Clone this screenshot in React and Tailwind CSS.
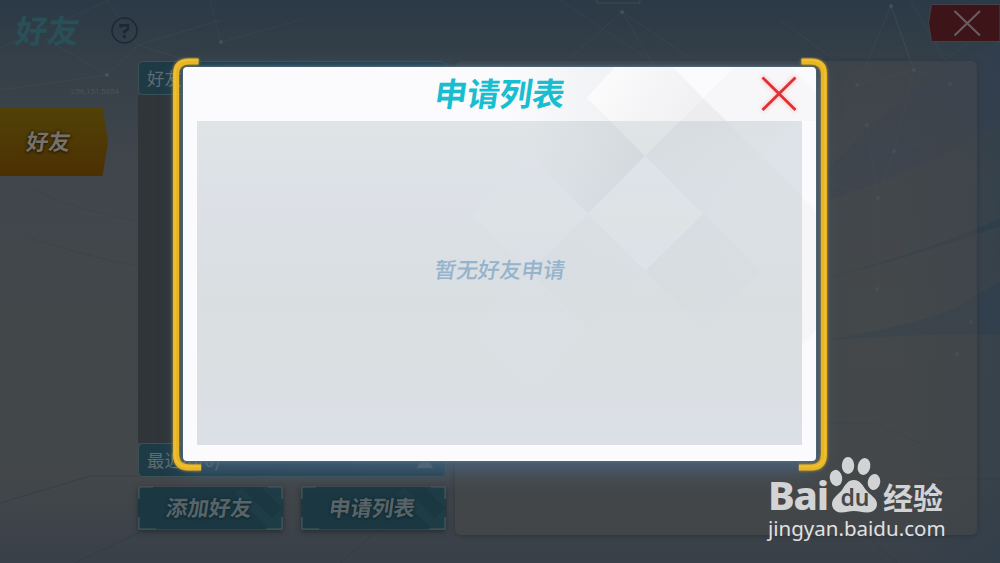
import React from 'react';

const cjk = "font-['Noto_Sans_CJK_SC',sans-serif]";

const stars = [
  [622, 12], [891, 6], [857, 85], [914, 70], [950, 84], [867, 125], [894, 151],
  [878, 198], [877, 289], [971, 322], [957, 354], [221, 42], [107, 75],
];

function Backdrop() {
  return (
    <svg className="absolute inset-0" width="1000" height="563" viewBox="0 0 1000 563" fill="none">
      <defs>
        <linearGradient id="sky" x1="0" y1="0" x2="0" y2="1">
          <stop offset="0" stopColor="#2b3a46" />
          <stop offset="0.12" stopColor="#364048" />
          <stop offset="0.3" stopColor="#40464c" />
          <stop offset="0.55" stopColor="#42484a" />
          <stop offset="0.85" stopColor="#43474a" />
          <stop offset="1" stopColor="#394049" />
        </linearGradient>
        <linearGradient id="side" x1="0" y1="0" x2="1" y2="0">
          <stop offset="0.9" stopColor="#2b3c4a" stopOpacity="0" />
          <stop offset="1" stopColor="#2b3c4a" stopOpacity="0.5" />
        </linearGradient>
      </defs>
      <rect width="1000" height="563" fill="url(#sky)" />
      <rect width="1000" height="563" fill="url(#side)" />
      <path d="M820 178 Q900 90 960 60 L1000 40 V124 Q900 180 820 202Z" fill="#334050" opacity="0.6" />
      <path d="M820 280 Q930 250 1000 219 V226 Q920 255 820 280Z" fill="#2d3d4b" opacity="0.8" />
      <path d="M820 341 Q920 325 960 306 Q980 292 1000 282 V334 Q900 334 820 341Z" fill="#313e4d" opacity="0.8" />
      <g stroke="#738087" strokeOpacity="0.1">
        <path d="M891 6 L857 85 L914 70Z M891 6 L914 70 L950 84 M622 12 L560 67 M622 12 L655 67 M622 12 L690 58 M560 0 L660 67 M867 125 L878 198 L894 151 L924 143 M894 151 L914 70 M878 198 V289 M820 180 L878 198 M820 125 H867" />
        <path d="M0 48 L110 0 M0 90 L107 75 L138 45 L221 20 M138 45 L107 0 M45 38 L107 75 M138 45 L180 58 M221 42 L210 0 M221 42 L300 20 M780 20 L835 60 M910 0 L945 60 L1000 20" />
      </g>
      <g stroke="#2d3a43" strokeOpacity="0.5">
        <path d="M0 503 L90 476 L138 476 M75 563 L140 532 M340 563 L378 530 M800 475 L897 563 M820 423 H875 L930 448 M930 479 L1000 479" />
        <path d="M30 188 Q80 212 138 221 M30 238 Q80 255 138 266" strokeOpacity="0.2" />
      </g>
      {stars.map(([x, y]) => (
        <circle key={`${x}-${y}`} cx={x} cy={y} r="2" fill="#7a8488" opacity="0.25" />
      ))}
      <path d="M597 0 V3 H640 V0" stroke="#59656c" strokeOpacity="0.4" />
    </svg>
  );
}

function Header() {
  return (
    <header className={`flex h-[61px] items-start ${cjk}`}>
      <h1 className="ml-[16px] mt-[9px] w-[67px] -skew-x-8 text-[32px] leading-[40px] font-bold text-[#295058]">好友</h1>
      <svg className="ml-[27px] mt-[17px]" width="28" height="28" viewBox="0 0 28 28" fill="none">
        <circle cx="14.5" cy="13.5" r="12.5" stroke="#1c2837" strokeWidth="1.5" />
        <path d="M10.8 10.8 V8.3 H17.8 V12.3 L14.3 14.8 V16.6" stroke="#1c2837" strokeWidth="2.8" />
        <rect x="12.9" y="18.2" width="2.9" height="2.9" fill="#1c2837" />
      </svg>
      <button className="ml-auto mt-1 block">
        <svg width="72" height="38" viewBox="0 0 72 38" fill="none">
          <path d="M3.5 .5 H72 V37.5 H3.5 L.5 19Z" fill="#3d1418" stroke="#43424a" strokeWidth="1" />
          <path d="M26.5 7 L52 31.5 M52 7 L26.5 31.5" stroke="#6b5d61" strokeWidth="2" />
        </svg>
      </button>
    </header>
  );
}

function Sidebar() {
  return (
    <nav className="w-[138px] shrink-0">
      <div className="flex h-[46px] justify-end pr-[19px] pt-[25px]">
        <span className="font-['Roboto',sans-serif] text-[8px] leading-[12px] text-[#575d61] opacity-60">256,151,5854</span>
      </div>
      <div className="flex h-[69px] w-[108px] items-center bg-linear-to-b from-[#514208] to-[#4c3003] pb-[3px] pl-[27px] [clip-path:polygon(0_0,95%_0,100%_50%,95%_100%,0_100%)]">
        <span className={`-skew-x-8 text-[22px] leading-none font-bold text-[#77716a] [text-shadow:0_0_3px_#251c04,0_1px_3px_#251c04] ${cjk}`}>好友</span>
      </div>
    </nav>
  );
}

function SectionBar({ label, arrow }) {
  return (
    <div className={`flex h-[34px] items-center justify-between rounded-[5px] border border-[#3a5157] bg-linear-to-r from-[#1d3a45] to-[#24424e] pl-[8px] pr-[12px] ${cjk}`}>
      <span className="text-[17.5px] leading-none text-[#5f6d72]">{label}</span>
      {arrow && (
        <svg width="16" height="15" viewBox="0 0 16 15">
          <path d="M8 0 L16 15 H0Z" fill="#56656f" />
        </svg>
      )}
    </div>
  );
}

function ActionButton({ children }) {
  return (
    <button className="grid h-[44px] w-[145px] shadow-[0_2px_5px_#252d33]">
      <svg className="col-start-1 row-start-1" width="145" height="44" viewBox="0 0 145 44" fill="none">
        <path d="M1 1 H144 V12 L145 14 V30 L144 32 V43 H1 V32 L0 30 V14 L1 12Z" fill="#1b3842" />
        <path d="M103 1 L134 32 L144 22 V43 H131 L97 9Z M123 1 L144 22 V1Z" fill="#33585b" opacity="0.15" />
        <path d="M1 13 V1 H15 M130 1 H144 V13 M1 31 V43 H18 M128 43 H144 V31" stroke="#465a5f" strokeWidth="1" />
      </svg>
      <span className={`col-start-1 row-start-1 self-center -skew-x-8 pr-[3px] pb-[3px] text-[21.5px] leading-none font-bold text-[#596469] [text-shadow:0_0_3px_#112932,0_1px_2px_#112932] ${cjk}`}>
        {children}
      </span>
    </button>
  );
}

function FriendPanel() {
  return (
    <section className="flex w-[308px] shrink-0 flex-col">
      <SectionBar label="好友(0/100)" />
      <div className="h-[348px] bg-[#2f3538]"></div>
      <SectionBar label="最近(0/0)" arrow />
      <div className="mt-[9px] flex justify-between">
        <ActionButton>添加好友</ActionButton>
        <ActionButton>申请列表</ActionButton>
      </div>
    </section>
  );
}

function Bracket({ flip }) {
  return (
    <svg className={flip ? 'relative -scale-x-100' : 'relative'} width="32" height="416" viewBox="0 0 32 416" fill="none">
      <path
        d="M28.5 4.5 H19 Q6 4.5 6 17 V397 Q6 410.5 19 410.5 H31"
        stroke="#e8b524"
        strokeWidth="6"
        className="[filter:drop-shadow(0_0_1.5px_#c9a32f)]"
      />
      <path d="M28.5 3 H19 Q5 3.5 5 17 V397 Q5 409.5 19 409.5 H31" stroke="#ffd24a" strokeOpacity="0.4" strokeWidth="1.5" />
    </svg>
  );
}

// faded checker tiles in the upper right of the dialog
function Checker() {
  return (
    <svg className="absolute inset-0" width="633" height="394" viewBox="183 67 633 394">
      <defs>
        <linearGradient id="shade" x1="0" y1="0" x2="1" y2="0">
          <stop offset="0" stopColor="#b4bdc2" stopOpacity="0" />
          <stop offset="1" stopColor="#aeb8bd" stopOpacity="0.36" />
        </linearGradient>
        <linearGradient id="shadeDown" x1="0" y1="0" x2="0.4" y2="1">
          <stop offset="0" stopColor="#aeb8be" stopOpacity="0.24" />
          <stop offset="1" stopColor="#c2cacd" stopOpacity="0.08" />
        </linearGradient>
        <linearGradient id="tile" x1="0" y1="0" x2="0" y2="1">
          <stop offset="0" stopColor="#dfe2eb" />
          <stop offset="0.55" stopColor="#dde3e5" />
          <stop offset="1" stopColor="#dee1e9" />
        </linearGradient>
        <linearGradient id="fold" x1="0" y1="0" x2="1" y2="0.3">
          <stop offset="0" stopColor="#fdfdfe" />
          <stop offset="1" stopColor="#f1f1f3" />
        </linearGradient>
        <clipPath id="body">
          <path d="M197 121 H802 V445 H197Z" />
        </clipPath>
      </defs>
      <path d="M500 67 H615 L587 98 L611 121 H500Z" fill="url(#shade)" opacity="0.4" />
      <path d="M615 67 H673 L703 98 L680 121 H611 L587 98Z" fill="url(#fold)" />
      <path d="M703 98 L680 121 H727Z" fill="#ededf0" />
      <path d="M703 98 L735 67 H790 L816 93 V121 H727Z" fill="#f7f6f8" />
      <path d="M802 197 L816 211 V330 L802 345Z" fill="#f6f5f8" />
      <g clipPath="url(#body)">
        <path d="M530 67 H615 L587 98 L645 156 L588 214 L530 156Z" fill="url(#shade)" opacity="0.6" />
        <path d="M703 98 L761 156 L703 214 L645 156Z" fill="url(#shadeDown)" />
        <path d="M703 98 L761 156 L802 115 V98Z" fill="url(#shadeDown)" opacity="0.5" />
        <path d="M530 156 L588 214 L530 271 L472 214Z" fill="url(#tile)" opacity="0.65" />
        <path d="M645 156 L703 214 L645 271 L588 214Z" fill="url(#tile)" />
        <path d="M761 156 L819 214 L761 271 L703 214Z" fill="#d9dfe2" opacity="0.6" />
        <path d="M761 156 L802 115 V197Z" fill="#dee2e9" />
        <path d="M703 214 L761 271 L703 329 L645 271Z" fill="url(#shadeDown)" opacity="0.45" />
        <path d="M588 214 L645 271 L588 329 L530 271Z" fill="url(#shadeDown)" opacity="0.25" />
        <path d="M530 271 L588 329 L530 387 L472 329Z" fill="url(#tile)" opacity="0.2" />
      </g>
    </svg>
  );
}

function RequestDialog() {
  return (
    <div className="absolute left-[170px] top-[57px] flex h-[416px] w-[660px]">
      <div className="absolute left-[13px] top-[10px] h-[394px] w-[633px] rounded-[4px] bg-[#fbfbfd] px-[14px] shadow-[0_0_3px_1px_#526b7d,0_7px_22px_0_#4b6683]">
        <div className="h-[54px]"></div>
        <div className="h-[324px] bg-[linear-gradient(180deg,#dfe4e6_0%,#dde1e7_25%,#d9dee1_55%,#dadfe2_75%,#dcdfe7_100%)]"></div>
        <Checker />
      </div>
      <Bracket />
      <div className={`relative flex flex-1 flex-col pt-[10px] ${cjk}`}>
        <div className="flex h-[54px] items-center justify-end">
          <h2 className="mr-[195px] pb-[3px] -skew-x-8 text-[32.5px] leading-none font-bold text-[#18bed0]">申请列表</h2>
          <button className="block">
            <svg width="38" height="38" viewBox="0 0 38 38" fill="none" className="[filter:drop-shadow(0_0_2px_#f8b0ac)]">
              <path d="M2.5 2.5 L35.5 35 M35.5 2.5 L2.5 35" stroke="#df3035" strokeWidth="2.8" />
            </svg>
          </button>
        </div>
        <div className="flex h-[298px] items-center justify-center pb-[2px]">
          <p className="-skew-x-8 text-[21.7px] leading-none font-medium text-[#94b3cd]">暂无好友申请</p>
        </div>
      </div>
      <Bracket flip />
    </div>
  );
}

function Watermark() {
  return (
    <div className="absolute left-[768px] top-[456px] text-[#d2d3d5]">
      <div className="flex h-[58px] items-end">
        <span className="w-[62px] pb-px font-['Noto_Sans',sans-serif] text-[40px] leading-[37px] font-extrabold tracking-[-1.2px]">Bai</span>
        <svg className="-ml-[3px]" width="54" height="58" viewBox="0 0 54 58">
          <g fill="#d2d3d5">
            <ellipse cx="9" cy="22" rx="6.2" ry="8.2" transform="rotate(-8 9 22)" />
            <ellipse cx="21" cy="9.500" rx="6.2" ry="8.500" />
            <ellipse cx="37" cy="10.5" rx="6.3" ry="8.500" transform="rotate(12 37 10.5)" />
            <ellipse cx="47" cy="26" rx="6.2" ry="8" transform="rotate(10 47 26)" />
            <path d="M27 24 C33 24 36 30 39 34 C43 39 50 42 50 48 C50 54 45 56.500 40 56.500 C35 56.500 32 55 27 55 C22 55 19 56.500 14 56.500 C9 56.500 5 53 5 48 C5 42 12 38 15 34 C18 29 21 24 27 24Z" />
          </g>
          <text x="13.5" y="50" fill="#45494b" fontSize="24" fontWeight="600" textLength="29" lengthAdjust="spacingAndGlyphs" fontFamily="Noto Sans, sans-serif">du</text>
        </svg>
        <span className={`ml-[2px] mb-[2px] text-[30px] leading-[32px] font-bold ${cjk}`}>经验</span>
      </div>
      <p className="mt-[1px] font-['Noto_Sans',sans-serif] text-[20.5px] leading-[26px] text-[#e0e1e2]">jingyan.baidu.com</p>
    </div>
  );
}

export default function App() {
  return (
    <div className="relative h-[563px] w-[1000px] overflow-hidden bg-[#3e454a]">
      <Backdrop />
      <div className="relative">
        <Header />
        <main className="flex">
          <Sidebar />
          <FriendPanel />
          <section className="ml-[9px] h-[474px] w-[522px] rounded-[6px] bg-linear-to-b from-[#45484d]/50 to-[#464847]/50 shadow-[0_1px_5px_#2b353d]"></section>
        </main>
      </div>
      <RequestDialog />
      <Watermark />
    </div>
  );
}
